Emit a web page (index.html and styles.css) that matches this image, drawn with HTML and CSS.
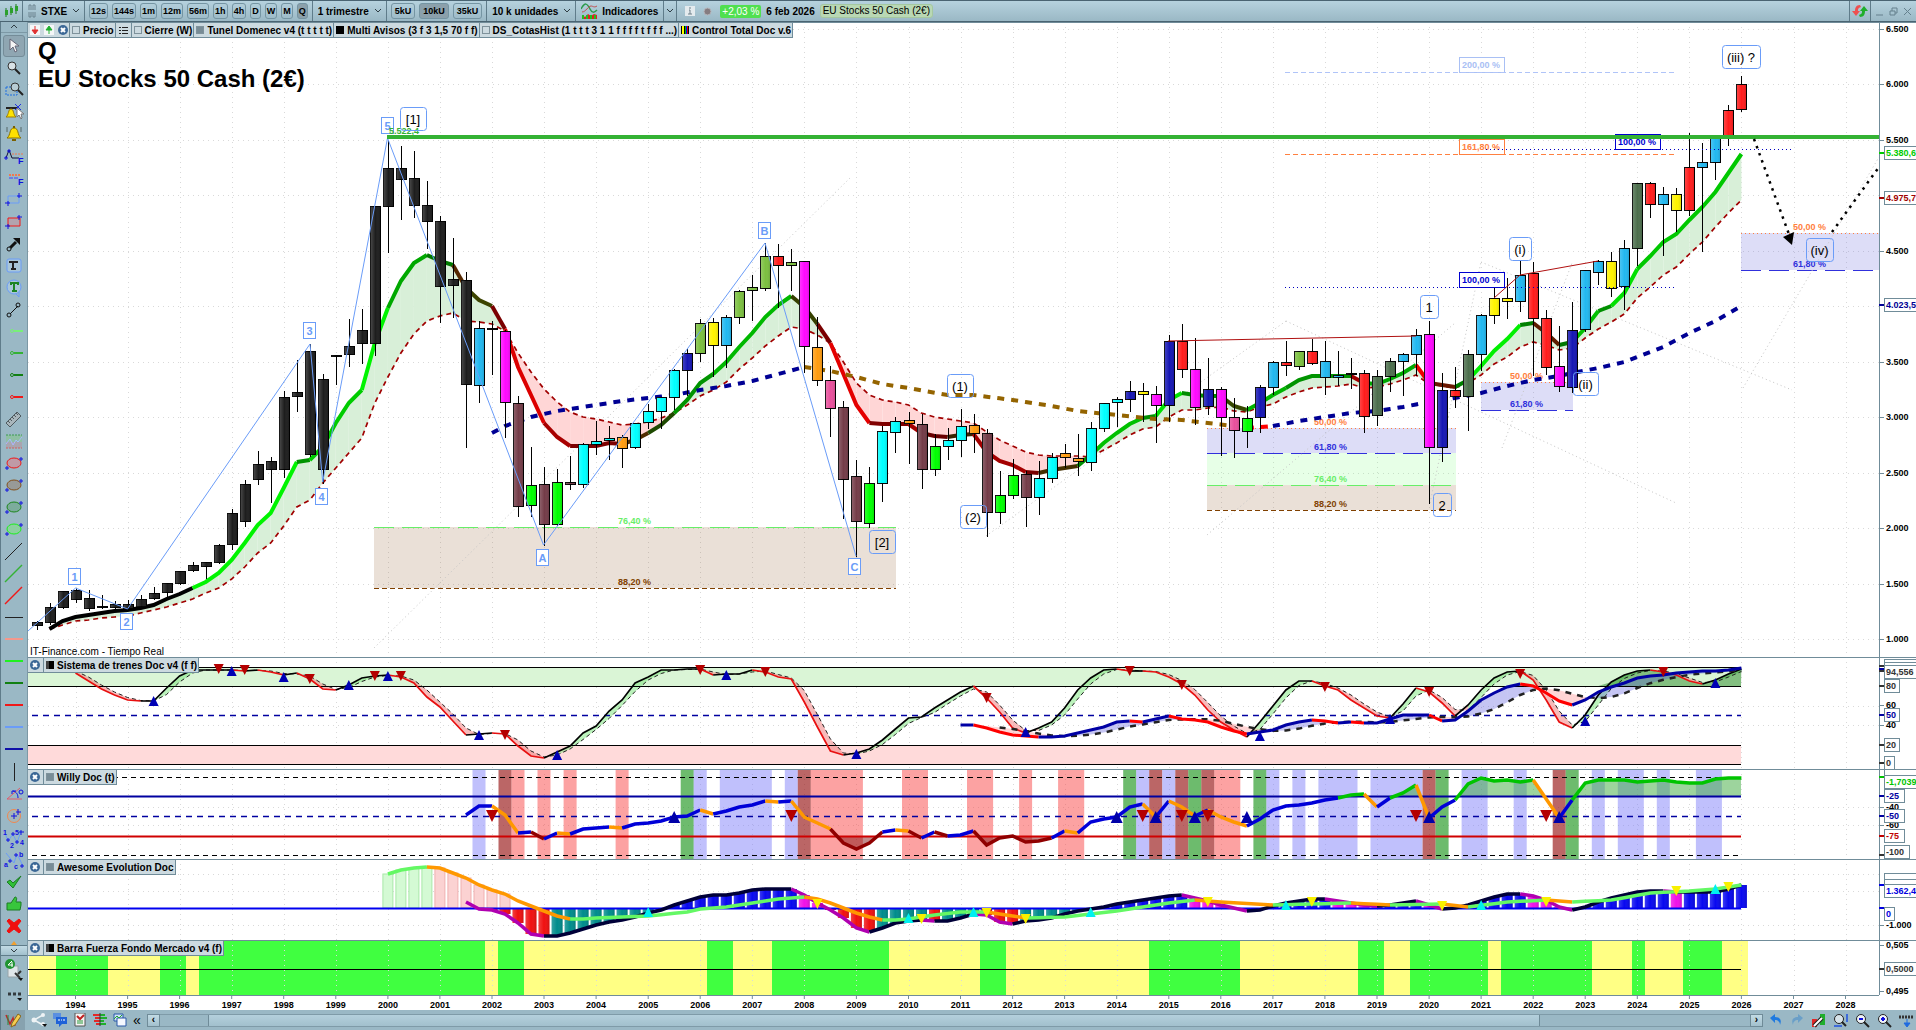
FILE: index.html
```html
<!DOCTYPE html>
<html lang="es">
<head>
    <meta charset="UTF-8">
    <meta name="viewport" content="width=device-width, initial-scale=1.0">
    <title>EU Stocks 50 Cash (2€)</title>
    <link rel="stylesheet" href="styles.css">
</head>
<body>
    <!-- Top toolbar -->
    <header class="toolbar">
        <div class="group group-logo">
            <svg width="14" height="14" viewBox="0 0 14 14"><path d="M2 4v9M7 2v9M12 0v10" stroke="#1c7a1c"/><path d="M1 6h3v5H1zM6 4h3v5H6zM11 2h3v5h-3z" fill="#2ca02c"/></svg>
        </div>
        <div class="group">
            <svg width="8" height="16" viewBox="0 0 8 16"><path d="M1 7V2h2v5M5 7V2h2v5M1 9v5h2V9M5 9v5h2V9" fill="none" stroke="#6c8490"/></svg>
            <label class="dropdown"><select aria-label="Valor"><option>STXE</option></select><svg class="chevron" viewBox="0 0 6 4"><path d="M0 0l3 3 3-3"/></svg></label>
        </div>
        <div class="group group-frames">
            <button>12s</button>
            <button>144s</button>
            <button>1m</button>
            <button>12m</button>
            <button>56m</button>
            <button>1h</button>
            <button>4h</button>
            <button>D</button>
            <button>W</button>
            <button>M</button>
            <button class="active">Q</button>
        </div>
        <div class="group">
            <label class="dropdown"><select aria-label="Periodo"><option>1 trimestre</option></select><svg class="chevron" viewBox="0 0 6 4"><path d="M0 0l3 3 3-3"/></svg></label>
        </div>
        <div class="group group-frames group-units">
            <button>5kU</button>
            <button class="active">10kU</button>
            <button>35kU</button>
        </div>
        <div class="group">
            <label class="dropdown"><select aria-label="Unidades"><option>10 k unidades</option></select><svg class="chevron" viewBox="0 0 6 4"><path d="M0 0l3 3 3-3"/></svg></label>
        </div>
        <div class="group">
            <button class="plain"><svg width="17" height="17" viewBox="0 0 17 17"><path d="M1 16v-4l3 2 3-3 3 2 3-2 3 1v4z" fill="#e02020"/><path d="M2 12v4M6 12v4M10 12v4M14 12v4" stroke="#20c020" stroke-width="2"/><path d="M0 6c4-7 6-6 9 0 2 4 4 4 7 1" fill="none" stroke="#2a9a4a" stroke-width="1.5"/><path d="M1 9c4 0 6-6 9-6 2 0 3 2 6 0" fill="none" stroke="#c05050"/></svg>Indicadores</button>
        </div>
        <div class="group group-arrow">
            <button class="plain" aria-label="Más indicadores"><svg class="chevron" viewBox="0 0 6 4"><path d="M0 0l3 3 3-3"/></svg></button>
        </div>
        <div class="group group-info">
            <svg width="10" height="10" viewBox="0 0 10 10"><path d="M0 0h10v10H0z" fill="#e4ebee"/><path d="M4 2h2M4 4h1v4M3 8h4" stroke="#70818a" fill="none"/></svg>
            <svg width="9" height="9" viewBox="0 0 9 9"><circle cx="4.5" cy="4.5" r="3.5" fill="#857c80" stroke="#b5b5ba"/></svg>
            <span class="change">+2,03 %</span>
            <b>6 feb 2026</b>
            <span class="asset">EU Stocks 50 Cash (2€)</span>
        </div>
        <div class="group group-sync">
            <svg width="16" height="16" viewBox="0 0 16 16"><path d="M8 2C4 2 3 5 3 8H0l4 5 4-5H6c0-2 0-3 3-4z" fill="#ee5050"/><path d="M8 14c4 0 5-3 5-6h3l-4-5-4 5h2c0 2 0 3-3 4z" fill="#1fae2c"/></svg>
        </div>
        <div class="window-buttons">
            <button aria-label="Minimizar"><svg width="9" height="9" viewBox="0 0 9 9"><path d="M1 8h7"/></svg></button>
            <button aria-label="Restaurar"><svg width="9" height="9" viewBox="0 0 9 9"><path d="M1 4h5v4H1zM3 4V1h5v5H6" fill="none"/></svg></button>
            <button aria-label="Cerrar"><svg width="9" height="9" viewBox="0 0 9 9"><path d="M1 1l7 7M8 1L1 8"/></svg></button>
        </div>
    </header>

    <div class="workspace">
        <!-- Drawing tools -->
        <nav class="sidebar">
            <button class="collapse" aria-label="Subir"><svg class="chevron" viewBox="0 0 6 4"><path d="M0 3l3-3 3 3"/></svg></button>
            <button class="tool selected" aria-label="Cursor"><svg viewBox="0 0 22 22"><path d="M7 4v11l3-3 2 5 2-1-2-5h4z" fill="#f4f4f4" stroke="#667"/></svg></button>
            <button class="tool" aria-label="Lupa"><svg viewBox="0 0 22 22"><circle cx="9" cy="9" r="4" fill="#d8e2e6" stroke="#333"/><path d="M12 12l5 5" stroke="#222" stroke-width="2"/></svg></button>
            <button class="tool" aria-label="Lupa de zona"><svg viewBox="0 0 22 22"><path d="M3 8h11v8H3z" fill="none" stroke="#1f6fe0" stroke-dasharray="2 1"/><circle cx="12" cy="8" r="4" fill="#b8ccd4" stroke="#333"/><path d="M15 11l5 5" stroke="#222" stroke-width="2"/></svg></button>
            <button class="tool" aria-label="Alerta en objeto"><svg viewBox="0 0 22 22"><path d="M3 7h12" stroke="#222" stroke-width="2"/><path d="M3 16c3-2 2-8 5-8s2 6 5 8z" fill="#ffe400" stroke="#a08000"/><path d="M12 3l6 6M18 3l-6 6" stroke="#2030e0"/><path d="M14 7v9l2-2 2 4 1-1-1-4h3z" fill="#fff" stroke="#777"/></svg></button>
            <button class="tool" aria-label="Alerta"><svg viewBox="0 0 22 22"><path d="M4 15c4-3 2-10 7-10s3 7 7 10z" fill="#ffe000" stroke="#8a7200"/><path d="M11 3v2M9 17h4" stroke="#7a6000" stroke-width="2"/><path d="M4 4v5M18 4v5" stroke="#566"/></svg></button>
            <button class="tool" aria-label="Fibonacci extensión"><svg viewBox="0 0 22 22"><path d="M3 13l3-8 3 8h7" fill="none" stroke="#113"/><path d="M9 9h11" stroke="#f07850" stroke-dasharray="2 1"/><path d="M1 13h4M3 11v4M4 6h4M6 4v4" stroke="#1010e0"/><text x="15" y="19">F</text></svg></button>
            <button class="tool" aria-label="Fibonacci retroceso"><svg viewBox="0 0 22 22"><path d="M6 8h11" stroke="#f07850" stroke-width="2" stroke-dasharray="2 1"/><path d="M6 11h10" stroke="#4040ff" stroke-dasharray="4 1"/><text x="15" y="18">F</text></svg></button>
            <button class="tool" aria-label="Rectángulo azul"><svg viewBox="0 0 22 22"><path d="M5 7h11v7H5z" fill="none" stroke="#6a9cf8"/><path d="M2 14h5M5 12v5M14 7h5M16 4v5" stroke="#1010e0"/></svg></button>
            <button class="tool" aria-label="Rectángulo rojo"><svg viewBox="0 0 22 22"><path d="M5 7h12v8H5z" fill="#b3a3ae" stroke="#f01818"/><path d="M2 15h5M5 13v5M14 6h5M16 4v5" stroke="#1010e0"/></svg></button>
            <button class="tool" aria-label="Flecha"><svg viewBox="0 0 22 22"><path d="M7 15l6-6" stroke="#111" stroke-width="3"/><path d="M10 5h7v7z" fill="#111"/><circle cx="6" cy="16" r="2" fill="#9ab8c5" stroke="#111"/></svg></button>
            <button class="tool" aria-label="Nota"><svg viewBox="0 0 22 22"><rect x="4" y="4" width="14" height="13" rx="2" fill="#a9c6d8" stroke="#6a9cf8"/><path d="M7 8V7h7v1M10 7v7M8 14h5" fill="none" stroke="#222" stroke-width="2"/></svg></button>
            <button class="tool" aria-label="Texto"><svg viewBox="0 0 22 22"><circle cx="11" cy="10" r="7" fill="#a9c6d8" stroke="#6a9cf8"/><path d="M13 17l3 3V15" fill="none" stroke="#6a9cf8"/><path d="M8 8V6h7v2M11 6v8M9 14h5" fill="none" stroke="#1c8424" stroke-width="2"/></svg></button>
            <button class="tool" aria-label="Segmento"><svg viewBox="0 0 22 22"><path d="M7 15l8-8" stroke="#111"/><circle cx="6" cy="16" r="2" fill="none" stroke="#111"/><circle cx="15" cy="6" r="2" fill="none" stroke="#111"/></svg></button>
            <button class="tool" aria-label="Semirrecta lima"><svg viewBox="0 0 22 22"><path d="M11 10h9" stroke="#78f078" stroke-width="2"/><circle cx="9" cy="10" r="1.5" fill="none" stroke="#78f078"/></svg></button>
            <button class="tool" aria-label="Semirrecta verde"><svg viewBox="0 0 22 22"><path d="M11 10h9" stroke="#34b234" stroke-width="2"/><circle cx="9" cy="10" r="1.5" fill="none" stroke="#34b234"/></svg></button>
            <button class="tool" aria-label="Semirrecta verde oscuro"><svg viewBox="0 0 22 22"><path d="M11 10h9" stroke="#128012" stroke-width="2"/><circle cx="9" cy="10" r="1.5" fill="none" stroke="#128012"/></svg></button>
            <button class="tool" aria-label="Semirrecta roja"><svg viewBox="0 0 22 22"><path d="M11 10h9" stroke="#f01818" stroke-width="2"/><circle cx="9" cy="10" r="1.5" fill="none" stroke="#f01818"/></svg></button>
            <button class="tool" aria-label="Regla"><svg viewBox="0 0 22 22"><path d="M3 14L14 3l4 4L7 18z" fill="#a9b6bc" stroke="#4f5b60"/><path d="M5 12l2 2M7 10l2 2M9 8l2 2M11 6l2 2M13 4l2 2" stroke="#4f5b60"/></svg></button>
            <button class="tool" aria-label="Canal"><svg viewBox="0 0 22 22"><path d="M3 4h16v7H3z" fill="#8fc0a4"/><path d="M3 11h16v6H3z" fill="#a9a5b0"/><path d="M3 4h16" stroke="#3c9a50" stroke-dasharray="2 1"/><path d="M3 17h16" stroke="#d06060" stroke-dasharray="2 1"/><path d="M3 13l4-5 3 6 3-5 2 2 4-5" fill="none" stroke="#a9b8ff"/></svg></button>
            <button class="tool" aria-label="Elipse roja"><svg viewBox="0 0 22 22"><ellipse cx="11" cy="10" rx="7" ry="5" fill="#c09aa6" stroke="#f01818"/><path d="M2 15h4M4 13v4M16 6h4M18 4v4" stroke="#1010e0"/></svg></button>
            <button class="tool" aria-label="Elipse marrón"><svg viewBox="0 0 22 22"><ellipse cx="11" cy="10" rx="7" ry="5" fill="#989a98" stroke="#84501c"/><path d="M2 15h4M4 13v4M16 6h4M18 4v4" stroke="#1010e0"/></svg></button>
            <button class="tool" aria-label="Elipse verde"><svg viewBox="0 0 22 22"><ellipse cx="11" cy="10" rx="7" ry="5" fill="#7cac9c" stroke="#1c861c"/><path d="M2 15h4M4 13v4M16 6h4M18 4v4" stroke="#1010e0"/></svg></button>
            <button class="tool" aria-label="Elipse lima"><svg viewBox="0 0 22 22"><ellipse cx="11" cy="10" rx="7" ry="5" fill="#8cd0a0" stroke="#1cf01c"/><path d="M2 15h4M4 13v4M16 6h4M18 4v4" stroke="#1010e0"/></svg></button>
            <button class="tool" aria-label="Recta negra"><svg viewBox="0 0 22 22"><path d="M2 19L19 2" stroke="#222"/></svg></button>
            <button class="tool" aria-label="Recta verde"><svg viewBox="0 0 22 22"><path d="M2 19L19 2" stroke="#34b234" stroke-width="1.5"/></svg></button>
            <button class="tool" aria-label="Recta roja"><svg viewBox="0 0 22 22"><path d="M2 19L19 2" stroke="#f01818" stroke-width="1.5"/></svg></button>
            <button class="tool" aria-label="Horizontal negra"><svg viewBox="0 0 22 22"><path d="M2 10.5h18" stroke="#222"/></svg></button>
            <button class="tool" aria-label="Horizontal salmón"><svg viewBox="0 0 22 22"><path d="M2 10h18" stroke="#f4988c" stroke-width="2"/></svg></button>
            <button class="tool" aria-label="Horizontal lima"><svg viewBox="0 0 22 22"><path d="M2 10h18" stroke="#20f020" stroke-width="2"/></svg></button>
            <button class="tool" aria-label="Horizontal verde"><svg viewBox="0 0 22 22"><path d="M2 10h18" stroke="#128012" stroke-width="2"/></svg></button>
            <button class="tool" aria-label="Horizontal roja"><svg viewBox="0 0 22 22"><path d="M2 10h18" stroke="#f01818" stroke-width="2"/></svg></button>
            <button class="tool" aria-label="Horizontal azul"><svg viewBox="0 0 22 22"><path d="M2 10h18" stroke="#6a9cf8" stroke-width="2"/></svg></button>
            <button class="tool" aria-label="Horizontal marino"><svg viewBox="0 0 22 22"><path d="M2 10h18" stroke="#1010a8" stroke-width="2"/></svg></button>
            <button class="tool" aria-label="Vertical"><svg viewBox="0 0 22 22"><path d="M11.5 2v18" stroke="#222"/></svg></button>
            <button class="tool" aria-label="Ángulo"><svg viewBox="0 0 22 22"><path d="M17 5L4 16h15" fill="none" stroke="#e05c6c"/><path d="M10 8c4 1 5 4 5 7M9 11V8h4" fill="none" stroke="#1010e0"/><circle cx="18" cy="9" r="2" fill="none" stroke="#1010e0"/></svg></button>
            <button class="tool" aria-label="Círculo"><svg viewBox="0 0 22 22"><circle cx="11" cy="11" r="6.5" fill="#a5b6b8" stroke="#f08850"/><path d="M8 11h6M11 8v6M13 7h5M15 4v6" stroke="#1010e0"/></svg></button>
            <button class="tool" aria-label="Ondas de impulso"><svg viewBox="0 0 22 22"><path d="M2 6l3 8 5-7 4 9 4-12" fill="none" stroke="#6a9cf8"/><path d="M3 13h4M5 11v4M8 7h4M10 5v4M12 15h4M14 13v4M16 5h5M18 3v5" stroke="#1010e0"/><text class="tiny" x="0" y="8">1</text><text class="tiny" x="7" y="21">2</text><text class="tiny" x="12" y="8">5</text><text class="tiny" x="17" y="18">4</text></svg></button>
            <button class="tool" aria-label="Ondas de corrección"><svg viewBox="0 0 22 22"><path d="M3 4l8 10 3-9 6 12" fill="none" stroke="#6a9cf8"/><path d="M5 12h4M7 10v4M11 6h4M13 4v4M17 17h4M19 15v4" stroke="#1010e0"/><text class="tiny" x="1" y="18">a</text><text class="tiny" x="16" y="8">b</text><text class="tiny" x="11" y="20">c</text></svg></button>
            <button class="tool" aria-label="Aceptar"><svg viewBox="0 0 22 22"><path d="M4 11l3-2 3 3 8-7-8 12z" fill="#30c038" stroke="#1b7c22"/></svg></button>
            <button class="tool" aria-label="Me gusta"><svg viewBox="0 0 22 22"><path d="M4 10h4l4-6c3 0 1 4 1 5h5v3l-1 5H4z" fill="#38c63c" stroke="#1b7c22"/></svg></button>
            <button class="tool" aria-label="Borrar"><svg viewBox="0 0 22 22"><path d="M4 6l2-2 5 4 5-4 2 2-4 5 4 5-2 2-5-4-5 4-2-2 4-5z" fill="#f01010" stroke="#f01010"/></svg></button>
            <span class="tool-peek"><svg viewBox="0 0 22 8"><path d="M8 8l3-4 3 4z" fill="#f0a030"/></svg></span>
            <button class="expand" aria-label="Bajar"><svg class="chevron" viewBox="0 0 6 4"><path d="M0 0l3 3 3-3"/></svg></button>
            <button class="objects" aria-label="Objetos"><svg width="20" height="24" viewBox="0 0 20 24"><path d="M4 8h10v11H4z" fill="#dfe6e9" stroke="#98a4a8"/><circle cx="6" cy="6" r="5" fill="#1f9430"/><path d="M4 7h5M8 4v5M8 3L4 7" stroke="#fff" fill="none"/><path d="M11 15l5 5M17 13l-3 3" stroke="#333" stroke-width="2"/><path d="M14 20h5l-2 3z" fill="#111"/></svg></button>
            <button class="dots" aria-label="Más"><svg width="16" height="10" viewBox="0 0 16 10"><path d="M2 2h3M7 2h3M12 2h3" stroke="#333a3e" stroke-width="3"/><path d="M11 6h5l-2 3z" fill="#111"/></svg></button>
        </nav>

        <!-- Chart panes -->
        <main class="panes">
            <section class="pane pane-price">
                <div class="pane-tabs">
                    <span class="tab tab-icons"><svg width="10" height="10" viewBox="0 0 10 10"><rect width="10" height="10" fill="#f4f6f7"/><path d="M5 1v5M2 5l3 4 3-4z" fill="#e03030" stroke="#e03030"/></svg><svg width="10" height="10" viewBox="0 0 10 10"><rect width="10" height="10" fill="#f4f6f7"/><path d="M5 9V4M2 5l3-4 3 4z" fill="#20b030" stroke="#20b030"/></svg><svg width="10" height="10" viewBox="0 0 10 10"><circle cx="5" cy="5" r="5" fill="#3c6896"/><path d="M3 3l4 4M7 3L3 7" stroke="#fff" stroke-width="2"/></svg></span>
                    <span class="tab"><i class="swatch hollow"></i>Precio</span>
                    <span class="tab tab-list"><svg width="9" height="9" viewBox="0 0 9 9"><path d="M0 1.5h2M0 4.5h2M0 7.5h2M3 1.5h6M3 4.5h6M3 7.5h6" stroke="#222"/></svg></span>
                    <span class="tab"><i class="swatch hollow"></i>Cierre (W)</span>
                    <span class="tab"><i class="swatch gray"></i>Tunel Domenec v4 (t t t t t)</span>
                    <span class="tab"><i class="swatch black"></i>Multi Avisos (3 f 3 1,5 70 f f)</span>
                    <span class="tab"><i class="swatch hollow"></i>DS_CotasHist (1 t t t 3 1 1 f f f f t f f f ...)</span>
                    <span class="tab"><i class="swatch stripes"></i>Control Total Doc v.6</span>
                </div>
                <h1 class="pane-title">Q<br>EU Stocks 50 Cash (2€)</h1>
                <svg id="price" class="plot" viewBox="28 22 1888 635"></svg>
            </section>
            <section class="pane">
                <div class="pane-tabs">
                    <button class="tab close" aria-label="Cerrar panel"><svg width="10" height="10" viewBox="0 0 10 10"><circle cx="5" cy="5" r="5" fill="#3c6896"/><path d="M3 3l4 4M7 3L3 7" stroke="#fff" stroke-width="2"/></svg></button>
                    <span class="tab"><i class="swatch half"></i>Sistema de trenes Doc v4 (f f)</span>
                </div>
                <svg id="trenes" class="plot" viewBox="28 657 1888 112"></svg>
            </section>
            <section class="pane">
                <div class="pane-tabs">
                    <button class="tab close" aria-label="Cerrar panel"><svg width="10" height="10" viewBox="0 0 10 10"><circle cx="5" cy="5" r="5" fill="#3c6896"/><path d="M3 3l4 4M7 3L3 7" stroke="#fff" stroke-width="2"/></svg></button>
                    <span class="tab"><i class="swatch gray"></i>Willy Doc (t)</span>
                </div>
                <svg id="willy" class="plot" viewBox="28 769 1888 90"></svg>
            </section>
            <section class="pane">
                <div class="pane-tabs">
                    <button class="tab close" aria-label="Cerrar panel"><svg width="10" height="10" viewBox="0 0 10 10"><circle cx="5" cy="5" r="5" fill="#3c6896"/><path d="M3 3l4 4M7 3L3 7" stroke="#fff" stroke-width="2"/></svg></button>
                    <span class="tab"><i class="swatch gray"></i>Awesome Evolution Doc</span>
                </div>
                <svg id="awesome" class="plot" viewBox="28 859 1888 81"></svg>
            </section>
            <section class="pane">
                <div class="pane-tabs">
                    <button class="tab close" aria-label="Cerrar panel"><svg width="10" height="10" viewBox="0 0 10 10"><circle cx="5" cy="5" r="5" fill="#3c6896"/><path d="M3 3l4 4M7 3L3 7" stroke="#fff" stroke-width="2"/></svg></button>
                    <span class="tab"><i class="swatch half"></i>Barra Fuerza Fondo Mercado v4 (f)</span>
                </div>
                <svg id="fuerza" class="plot" viewBox="28 940 1888 70"></svg>
            </section>
        </main>
    </div>

    <!-- Bottom bar -->
    <footer class="bottombar">
        <button class="draw" aria-label="Dibujar"><svg width="16" height="16" viewBox="0 0 16 16"><path d="M1 3l4 9 3-6 2 8" fill="none" stroke="#c02828" stroke-width="1.5"/><path d="M3 3v10" stroke="#2a8a3a"/><path d="M6 15l1-4 6-9 3 2-6 9z" fill="#f5cc50" stroke="#86661c"/></svg></button>
        <button aria-label="Compartir"><svg width="16" height="16" viewBox="0 0 16 16"><path d="M12 3L3 8l9 5" fill="none" stroke="#eef3f5" stroke-width="1.5"/><circle cx="12" cy="3" r="2" fill="#eef3f5"/><circle cx="3" cy="8" r="2.5" fill="#eef3f5"/><circle cx="12" cy="12" r="2" fill="#eef3f5"/><path d="M11 12h5l-2 3z" fill="#111"/></svg></button>
        <button aria-label="Chat"><svg width="14" height="14" viewBox="0 0 14 14"><path d="M0 0h8v6H0z" fill="#5b8fe0"/><path d="M3 4h11v7H9l-3 3v-3H3z" fill="#1f62d8"/><path d="M5 7h2M8 7h1M10 7h2" stroke="#fff"/></svg></button>
        <button aria-label="Informe"><svg width="14" height="14" viewBox="0 0 14 14"><path d="M2 0h10v13H2z" fill="#f4f4f4" stroke="#555"/><path d="M4 3l3 3 4-4" stroke="#c02020" stroke-width="2" fill="none"/><path d="M4 8h6M4 10h6" stroke="#2a9a3a"/></svg></button>
        <button aria-label="Libro de órdenes"><svg width="14" height="14" viewBox="0 0 14 14"><path d="M0 2h7M2 5h5M1 8h6M3 11h4" stroke="#e02828" stroke-width="2"/><path d="M7 2h5M7 5h7M7 8h4M7 11h6" stroke="#1fae2c" stroke-width="2"/><path d="M7 0v13" stroke="#333"/></svg></button>
        <button aria-label="Ventanas"><svg width="14" height="14" viewBox="0 0 14 14"><path d="M1 1h9v7H1z" fill="#cfe0f8" stroke="#2858a8"/><path d="M4 5h9v8H4z" fill="#f4f8ff" stroke="#2858a8"/><path d="M1 6l3-3 2 2 3-3" fill="none" stroke="#1fae2c"/></svg></button>
        <button class="fold" aria-label="Plegar">«</button>
        <div class="scrollbar">
            <button aria-label="Izquierda">‹</button>
            <div class="track"><div class="thumb"></div></div>
            <button aria-label="Derecha">›</button>
        </div>
        <div class="view-buttons">
            <button aria-label="Deshacer"><svg width="14" height="14" viewBox="0 0 14 14"><path d="M1 5l5-4v3c5 0 7 3 5 8 0-3-2-5-5-5v3z" fill="#1f7ae0"/></svg></button>
            <button aria-label="Rehacer"><svg width="14" height="14" viewBox="0 0 14 14"><path d="M13 5L8 1v3C3 4 1 7 3 12c0-3 2-5 5-5v3z" fill="#6a9fc8"/></svg></button>
            <button aria-label="Configurar"><svg width="15" height="15" viewBox="0 0 15 15"><path d="M1 6h5v8H1z" fill="#e02828"/><path d="M9 1h5v11H9z" fill="#1fae2c"/><path d="M3 13l8-8" stroke="#222" stroke-width="4"/><path d="M3 13l8-8" stroke="#fff" stroke-width="2"/></svg></button>
            <button aria-label="Ajustar"><svg width="15" height="15" viewBox="0 0 15 15"><circle cx="6" cy="6" r="4.5" fill="#d8e4ea" stroke="#222"/><path d="M9 9l4 4" stroke="#222" stroke-width="2"/><path d="M14 1v8M1 13h8" stroke="#1f50e0" stroke-width="1.5"/></svg></button>
            <button aria-label="Alejar"><svg width="15" height="15" viewBox="0 0 15 15"><circle cx="6" cy="6" r="4.5" fill="#f0f4f8" stroke="#222"/><path d="M9 9l5 5" stroke="#222" stroke-width="2"/><path d="M4 6h4" stroke="#1010e0" stroke-width="2"/></svg></button>
            <button aria-label="Acercar"><svg width="15" height="15" viewBox="0 0 15 15"><circle cx="6" cy="6" r="4.5" fill="#f0f4f8" stroke="#222"/><path d="M9 9l5 5" stroke="#222" stroke-width="2"/><path d="M4 6h4M6 4v4" stroke="#1010e0" stroke-width="2"/></svg></button>
            <button aria-label="Descargar"><svg width="15" height="15" viewBox="0 0 15 15"><path d="M0 4h15" stroke="#333" stroke-width="3" stroke-dasharray="2 1"/><path d="M8 6v5M5 10h6l-3 4z" fill="#1f6ae0" stroke="#1f6ae0"/></svg></button>
        </div>
    </footer>

    <script src="chart.js"></script>
</body>
</html>
```
FILE: styles.css
```css
/* General Reset */
* {
    margin: 0;
    padding: 0;
    box-sizing: border-box;
}

body {
    min-height: 100vh;
    display: flex;
    flex-direction: column;
    background-color: #9ab8c5;
    font-family: "Liberation Sans", Arial, sans-serif;
    font-size: 10px;
    color: #000;
}

button, select {
    font: inherit;
    color: inherit;
    background: none;
    border: none;
}

svg {
    display: block;
    flex: none;
}

/* Top toolbar */
.toolbar {
    display: flex;
    align-items: stretch;
    height: 22px;
    border-top: 1px solid #4a6472;
    border-bottom: 1px solid #4a6472;
    background: linear-gradient(#b6d2de, #9ab8c5);
    font-weight: bold;
    white-space: nowrap;
}

.group {
    display: flex;
    align-items: center;
    gap: 5px;
    padding: 0 5px;
    border-right: 1px solid #5f7c8a;
}

.group-logo {
    padding: 0 4px;
}

.group-frames {
    gap: 4px;
    padding: 0 4px;
    font-size: 9px;
}

.group-frames button {
    height: 16px;
    padding: 0 1px;
    border: 1px solid #7595a3;
    border-radius: 3px;
}

.group-units button {
    padding: 0 3px;
}

.group-frames .active {
    background-color: #8ba0ab;
}

.dropdown {
    display: flex;
    align-items: center;
    gap: 5px;
}

.dropdown select {
    appearance: none;
    font-weight: bold;
}

.chevron {
    width: 6px;
    height: 4px;
    fill: none;
    stroke: #2f3d44;
    stroke-width: 1;
    overflow: visible;
}

.plain {
    display: flex;
    align-items: center;
    gap: 4px;
    font-weight: bold;
}

.group-arrow {
    padding: 0 3px;
}

.group-info {
    flex: 1;
    gap: 5px;
    padding-left: 8px;
}

.group-info svg {
    margin-right: 3px;
}

.change {
    padding: 0 2px;
    line-height: 13px;
    border-radius: 2px;
    background-color: #50e050;
    color: #fff;
    font-weight: normal;
}

.asset {
    padding: 0 2px;
    line-height: 12px;
    border: 1px solid #a5c8a0;
    border-radius: 3px;
    background-color: #b9d8b4;
    font-weight: normal;
}

.group-sync {
    padding: 0 2px;
}

.window-buttons {
    display: flex;
    align-items: center;
    gap: 5px;
    padding: 0 4px;
    stroke: #64808d;
    stroke-width: 1;
}

/* Drawing tools */
.workspace {
    display: flex;
    align-items: stretch;
}

.sidebar {
    display: flex;
    flex-direction: column;
    width: 28px;
    flex: none;
    border-left: 1px solid #5f7c8a;
    border-right: 1px solid #7c98a5;
    background-color: #9ab8c5;
}

.sidebar button {
    display: flex;
    align-items: center;
    justify-content: center;
}

.collapse {
    height: 11px;
    margin-bottom: 2px;
    border-bottom: 1px solid #7c98a5;
}

.tool {
    height: 22px;
    margin: 0 2px;
    border: 1px solid transparent;
    border-radius: 3px;
}

.tool svg {
    width: 22px;
    height: 22px;
}

.tool text {
    font-size: 9px;
    font-weight: bold;
    fill: #1010e0;
}

.tool .tiny {
    font-size: 7px;
}

.tool.selected {
    border-color: #748c98;
    background-color: #8fa6b2;
}

.tool-peek {
    display: flex;
    justify-content: center;
    margin-top: auto;
}

.tool-peek svg {
    width: 22px;
    height: 8px;
}

.expand {
    height: 11px;
    border: solid #5f7c8a;
    border-width: 1px 0;
    background: linear-gradient(#c2dbe5, #a2c0cd);
}

.objects {
    height: 28px;
}

.dots {
    height: 26px;
}

/* Chart panes */
.panes {
    flex: 1;
    min-width: 0;
    background-color: #fff;
}

.pane {
    position: relative;
}

.plot {
    width: 100%;
}

.pane-tabs {
    position: absolute;
    top: 1px;
    left: 0;
    display: flex;
    height: 15px;
    border-bottom: 1px solid #708c99;
    background-color: #ccdae0;
    font-weight: bold;
    white-space: nowrap;
}

.tab {
    display: flex;
    align-items: center;
    gap: 3px;
    padding: 0 1px 0 2px;
    border-right: 1px solid #708c99;
}

.tab-icons {
    gap: 4px;
}

.tab-list {
    padding: 0 3px;
}

.tab.close {
    padding: 0 3px 0 2px;
}

.swatch {
    width: 8px;
    height: 8px;
    border: 1px solid #7f929b;
}

.gray {
    background-color: #788c96;
}

.black {
    border-color: #000;
    background-color: #000;
}

.half {
    border: none;
    background: linear-gradient(90deg, #444 3px, #000 3px);
}

.stripes {
    border: none;
    background: linear-gradient(90deg, #000 1px, #ff0 1px 3px, #000 3px 4px, #0b0 4px 5px, #00f 5px 6px, #d00 6px 7px, #000 7px);
}

.pane-title {
    position: absolute;
    top: 15px;
    left: 10px;
    font-size: 24px;
    line-height: 28px;
}

/* Plot text */
.plot text {
    font-size: 9px;
    font-weight: bold;
}

.plot .wave {
    font-size: 13px;
    font-weight: normal;
}

.plot .wave-small {
    font-size: 11px;
    fill: #6a9cf8;
}

.plot .credit {
    font-size: 10px;
    font-weight: normal;
}

/* Bottom bar */
.bottombar {
    display: flex;
    align-items: center;
    gap: 6px;
    height: 20px;
    padding-right: 2px;
    border-left: 1px solid #5f7c8a;
    background-color: #9ab8c5;
}

.draw {
    display: flex;
    align-items: center;
    justify-content: center;
    width: 24px;
    height: 20px;
    background-color: #87a2af;
}

.fold {
    font-size: 14px;
    line-height: 14px;
}

.scrollbar {
    flex: 1;
    display: flex;
    height: 13px;
}

.scrollbar button {
    width: 13px;
    border: 1px solid #6f8b98;
    background: linear-gradient(#c2dbe5, #a2c0cd);
    font-weight: bold;
    line-height: 8px;
}

.track {
    flex: 1;
    padding: 0 13% 0 3%;
    border: solid #7f9ba8;
    border-width: 1px 0;
}

.thumb {
    height: 100%;
    border: solid #6f8b98;
    border-width: 0 1px;
    background: linear-gradient(#b4d0dc, #a2c0cd);
}

.view-buttons {
    display: flex;
    gap: 7px;
}
```
FILE: chart.js
```js
const X0 = 75.5;      // first quarter of 1994
const STEP = 13.015;  // one quarter
const END = 1741;
const AXIS = 1879;

const x = k => Math.round((X0 + STEP * k) * 10) / 10;
const svg = id => document.getElementById(id);

function add(id, markup) {
    svg(id).insertAdjacentHTML('beforeend', markup);
}

function line(x1, y1, x2, y2, color, width = 1, extra = '') {
    return `<line x1="${x1}" y1="${y1}" x2="${x2}" y2="${y2}" stroke="${color}" stroke-width="${width}" ${extra}/>`;
}

function poly(points, color, width, extra = '') {
    return `<polyline points="${points.map(p => p.join(',')).join(' ')}" fill="none" stroke="${color}" stroke-width="${width}" ${extra}/>`;
}

function rect(x1, y1, x2, y2, fill, extra = '') {
    return `<rect x="${x1}" y="${y1}" width="${x2 - x1}" height="${y2 - y1}" fill="${fill}" ${extra}/>`;
}

function text(tx, ty, content, color = '#000', extra = '') {
    return `<text x="${tx}" y="${ty}" fill="${color}" ${extra}>${content}</text>`;
}

// array of values starting at quarter k -> points
function series(start, values) {
    return values.map((y, i) => [x(start + i), y]);
}

// fills missing quarters of a sparse [k, y] list
function spread(list) {
    const out = [];
    for (let i = 0; i < list.length - 1; i++) {
        const [a, ya] = list[i], [b, yb] = list[i + 1];
        for (let k = a; k < b; k++) out.push(ya + (yb - ya) * (k - a) / (b - a));
    }
    out.push(list[list.length - 1][1]);
    return out;
}

function grid(id, top, bottom, rows) {
    let out = '';
    for (let k = 0; k <= 136; k += 4) out += line(Math.round(x(k)) + .5, top, Math.round(x(k)) + .5, bottom, '#d9d9d9', 1, 'stroke-dasharray="1 4"');
    rows.forEach(y => out += line(28, y + .5, AXIS, y + .5, '#d9d9d9', 1, 'stroke-dasharray="1 4"'));
    add(id, out);
}

function area(a, b, start, upColor, downColor) {
    let out = '';
    for (let i = 0; i < a.length - 1; i++) {
        const color = a[i] + a[i + 1] < b[i] + b[i + 1] ? upColor : downColor;
        const l = x(start + i), r = x(start + i + 1);
        out += `<polygon points="${l},${a[i]} ${r},${a[i + 1]} ${r},${b[i + 1]} ${l},${b[i]}" fill="${color}"/>`;
    }
    return out;
}

// line whose every segment takes its own colour, equal neighbours are joined
function colored(points, width, pick) {
    let out = '', run = [points[0]], last = null;
    for (let i = 1; i < points.length; i++) {
        const c = pick(i, points[i - 1][1], points[i][1]);
        if (last && c !== last) {
            out += poly(run, last, width);
            run = [points[i - 1]];
        }
        run.push(points[i]);
        last = c;
    }
    return out + poly(run, last, width);
}

function up(k, y, color, s = 6) {
    return `<polygon points="${x(k) - s},${y + s} ${x(k) + s},${y + s} ${x(k)},${y - s}" fill="${color}"/>`;
}

function down(k, y, color, s = 6) {
    return `<polygon points="${x(k) - s},${y - s} ${x(k) + s},${y - s} ${x(k)},${y + s}" fill="${color}"/>`;
}

// empty labels are boxes hidden behind a newer one
function axis(id, top, bottom, plain, boxed) {
    let out = rect(AXIS, top, 1916, bottom, '#fff') + line(AXIS + .5, top, AXIS + .5, bottom, '#708c99');
    plain.forEach(([label, y]) => out += line(AXIS, y + .5, AXIS + 5, y + .5, '#708c99') + text(AXIS + 7, y + 3, label));
    boxed.forEach(([label, y, color = '#333', tick = y]) => {
        out += line(AXIS, tick, AXIS + 5, tick, color, 2);
        out += rect(AXIS + 5.5, y - 6.5, AXIS + 10.5 + (label.length || 6) * 5, y + 6.5, '#fff', 'stroke="#708c99"');
        if (label) out += text(AXIS + 7, y + 3, label, color);
    });
    out += line(28, top + .5, 1916, top + .5, '#708c99');
    add(id, out);
}

/* ---------- Price ---------- */

const colors = {
    K: '#1d1d1d', B: '#22b8f0', Y: '#fff400', M: '#ff08ff', W: '#743c48', G: '#00ff00', C: '#00ffff',
    O: '#ff9c10', N: '#1616b4', L: '#7cc040', R: '#ff1c1c', D: '#4d6f4d', P: '#e8509c'
};

// high, body top, body bottom, low, colour; one row per quarter since 1993 Q2
const candles = [
    [621, 622, 626, 629, 'K'], [603, 607, 623, 624, 'K'], [591, 591, 608, 608, 'K'], [588, 590, 600, 602, 'K'],
    [590, 598, 609, 610, 'K'], [595, 606, 608, 608, 'K'], [601, 604, 608, 608, 'K'], [600, 604, 609, 610, 'K'],
    [595, 599, 607, 607, 'K'], [587, 593, 599, 599, 'K'], [583, 583, 593, 599, 'K'], [571, 571, 584, 584, 'K'],
    [562, 565, 571, 571, 'K'], [562, 562, 567, 578, 'K'], [544, 545, 563, 563, 'K'], [509, 513, 545, 549, 'K'],
    [480, 484, 522, 526, 'K'], [451, 464, 480, 484, 'K'], [457, 461, 470, 502, 'K'], [391, 397, 470, 477, 'K'],
    [360, 392, 397, 411, 'K'], [344, 351, 455, 456, 'K'], [374, 379, 470, 483, 'K'], [355, 355, 357, 384, 'K'],
    [319, 346, 355, 366, 'K'], [309, 330, 344, 363, 'K'], [206, 206, 344, 355, 'K'], [140, 168, 207, 252, 'K'],
    [146, 168, 180, 219, 'K'], [151, 178, 206, 217, 'K'], [181, 205, 222, 248, 'K'], [216, 221, 287, 322, 'K'],
    [238, 279, 286, 317, 'K'], [272, 280, 385, 447, 'K'], [321, 328, 386, 402, 'B'], [321, 328, 330, 374, 'Y'],
    [330, 331, 403, 437, 'M'], [396, 403, 507, 516, 'W'], [447, 485, 506, 516, 'G'], [467, 484, 525, 545, 'W'],
    [469, 482, 525, 525, 'G'], [456, 482, 485, 489, 'W'], [443, 444, 485, 487, 'C'], [421, 441, 445, 454, 'C'],
    [426, 438, 441, 459, 'C'], [435, 437, 449, 467, 'O'], [423, 423, 448, 448, 'C'], [404, 411, 423, 428, 'C'],
    [397, 397, 412, 428, 'C'], [369, 370, 398, 409, 'C'], [349, 353, 371, 395, 'N'], [319, 323, 354, 361, 'L'],
    [318, 322, 346, 376, 'Y'], [315, 317, 346, 367, 'B'], [290, 291, 318, 323, 'L'], [275, 287, 291, 320, 'L'],
    [243, 256, 289, 290, 'L'], [244, 256, 266, 307, 'R'], [249, 262, 266, 290, 'L'], [261, 261, 347, 372, 'M'],
    [317, 347, 381, 385, 'O'], [366, 380, 409, 436, 'P'], [401, 407, 480, 518, 'W'], [460, 476, 522, 556, 'W'],
    [467, 483, 524, 527, 'G'], [426, 431, 484, 501, 'C'], [417, 421, 433, 452, 'C'], [412, 420, 424, 463, 'O'],
    [414, 424, 470, 488, 'W'], [434, 446, 470, 475, 'G'], [428, 440, 447, 459, 'C'], [409, 426, 441, 456, 'C'],
    [414, 425, 434, 452, 'O'], [429, 433, 513, 536, 'W'], [471, 495, 513, 523, 'G'], [459, 475, 496, 498, 'G'],
    [471, 474, 498, 526, 'W'], [461, 478, 498, 514, 'C'], [453, 457, 479, 482, 'C'], [444, 453, 458, 467, 'O'],
    [434, 458, 462, 475, 'O'], [422, 428, 463, 470, 'C'], [403, 403, 429, 431, 'C'], [397, 399, 403, 426, 'C'],
    [381, 391, 400, 411, 'N'], [383, 391, 395, 421, 'Y'], [386, 394, 406, 442, 'M'], [335, 341, 406, 421, 'N'],
    [324, 341, 370, 377, 'R'], [338, 369, 408, 424, 'M'], [358, 389, 407, 414, 'N'], [387, 389, 418, 455, 'M'],
    [398, 417, 431, 457, 'P'], [406, 418, 432, 447, 'G'], [385, 387, 418, 432, 'N'], [361, 362, 388, 394, 'B'],
    [341, 362, 366, 375, 'R'], [351, 351, 367, 369, 'L'], [339, 351, 364, 364, 'R'], [341, 361, 378, 394, 'B'],
    [351, 375, 378, 385, 'B'], [358, 373, 375, 388, 'K'], [370, 373, 417, 432, 'R'], [370, 376, 416, 425, 'D'],
    [358, 361, 377, 391, 'D'], [353, 354, 362, 395, 'B'], [329, 335, 355, 375, 'B'], [321, 334, 448, 503, 'M'],
    [373, 390, 448, 461, 'N'], [367, 390, 397, 407, 'R'], [350, 354, 397, 430, 'D'], [314, 315, 355, 370, 'B'],
    [285, 298, 316, 323, 'Y'], [278, 298, 302, 318, 'Y'], [260, 275, 302, 311, 'B'], [262, 273, 319, 375, 'R'],
    [310, 318, 368, 374, 'R'], [326, 366, 387, 391, 'M'], [302, 330, 388, 392, 'N'], [270, 270, 330, 331, 'B'],
    [260, 261, 273, 284, 'B'], [252, 261, 289, 296, 'Y'], [240, 248, 287, 309, 'B'], [183, 183, 249, 265, 'D'],
    [182, 183, 205, 217, 'R'], [187, 194, 205, 255, 'B'], [188, 194, 211, 231, 'Y'], [133, 167, 211, 215, 'R'],
    [143, 162, 168, 251, 'B'], [136, 136, 163, 179, 'B'], [105, 110, 137, 145, 'R'], [76, 84, 110, 111, 'R']
];

// both tunnel lines start at quarter -2
const fast = [
    629, 621, 617, 615, 613, 611, 610, 608, 605, 599, 594, 588, 582, 573, 560, 543, 525, 513, 488, 462, 460, 447,
    423, 403, 390, 343, 308, 281, 263, 255, 261, 265, 288, 300, 306, 329, 367, 395, 423, 437, 446, 446, 446, 443,
    444, 440, 433, 425, 413, 400, 383, 374, 362, 347, 333, 317, 305, 296, 307, 324, 343, 374, 405, 423, 424, 424,
    424, 433, 436, 437, 435, 434, 452, 461, 465, 472, 473, 470, 468, 466, 455, 443, 433, 424, 418, 416, 400, 393,
    395, 396, 396, 406, 410, 403, 395, 388, 380, 376, 376, 376, 376, 383, 384, 379, 373, 365, 383, 385, 387, 380,
    366, 351, 339, 325, 323, 333, 345, 342, 328, 311, 306, 293, 269, 256, 242, 234, 220, 207, 192, 173, 154
];
const slow = [
    629, 625, 621, 620, 618, 617, 616, 613, 610, 607, 603, 599, 593, 588, 579, 567, 553, 543, 526, 507, 500, 483,
    468, 453, 438, 403, 377, 353, 334, 321, 316, 313, 321, 322, 324, 331, 353, 372, 389, 402, 412, 417, 419, 422,
    425, 424, 422, 418, 413, 405, 396, 390, 382, 369, 358, 346, 336, 327, 329, 335, 343, 362, 383, 395, 400, 402,
    405, 413, 417, 419, 421, 423, 432, 440, 446, 452, 455, 456, 456, 456, 457, 450, 443, 435, 429, 427, 417, 410,
    410, 408, 407, 411, 412, 407, 404, 397, 392, 388, 387, 386, 384, 388, 387, 384, 380, 375, 384, 386, 388, 383,
    375, 364, 357, 347, 342, 345, 350, 348, 338, 329, 322, 314, 298, 287, 275, 267, 254, 242, 227, 213, 200
];

// quarter up to which each colour of the fast line lasts
const fastColors = [
    [9, '#000'], [17, '#00f400'], [18, '#009400'], [22, '#00cc00'], [24, '#00f400'], [27, '#00a800'], [29, '#007a00'],
    [30, '#552800'], [32, '#3c4400'], [33, '#7a0000'], [36, '#dc0000'], [38, '#a80000'], [42, '#7c0000'],
    [44, '#502c00'], [46, '#1e4a00'], [49, '#009400'], [55, '#00b800'], [57, '#364000'], [58, '#7a0000'],
    [61, '#e40000'], [64, '#800000'], [65, '#a40000'], [67, '#680000'], [69, '#3a2400'], [73, '#a40000'],
    [74, '#780000'], [77, '#443000'], [78, '#009000'], [82, '#00c000'], [83, '#009000'], [85, '#00e400'],
    [88, '#008c00'], [90, '#364800'], [93, '#00b400'], [98, '#009400'], [99, '#a40000'], [103, '#00a800'],
    [104, '#f00000'], [106, '#6c1800'], [107, '#008000'], [111, '#00f000'], [112, '#008000'], [114, '#601c00'],
    [115, '#007800'], [117, '#00c000'], [118, '#009000'], [120, '#00e000'], [128, '#00c800']
];

grid('price', 22, 657, [29, 84, 140, 195, 251, 306, 362, 417, 473, 528, 584, 639]);

function fibBox(x1, x2, levels, fills, tx) {
    let out = '';
    fills.forEach((fill, i) => out += rect(x1, levels[i][0], x2, levels[i + 1][0], fill));
    levels.forEach(([y, label, color, dash]) => {
        out += line(x1, y + .5, x2, y + .5, color, 1, `stroke-dasharray="${dash}"`);
        out += text(tx, y - 3, label, color);
    });
    return out;
}

const orange = '#ff8040', blue = '#3030dc', lime = '#68ee68', brown = '#804000', lilac = 'rgba(120,120,225,.25)';
add('price',
    fibBox(374, 896, [[527, '76,40 %', lime, '20 8'], [588, '88,20 %', brown, '5 3']], ['rgba(165,120,80,.23)'], 618) +
    fibBox(1207, 1456, [[428, '50,00 %', orange, '1 3'], [453, '61,80 %', blue, '20 8'], [485, '76,40 %', lime, '20 8'], [510, '88,20 %', brown, '5 3']],
        [lilac, 'rgba(120,255,120,.18)', 'rgba(165,120,80,.23)'], 1314) +
    fibBox(1481, 1573, [[382, '50,00 %', orange, '1 3'], [410, '61,80 %', blue, '20 8']], [lilac], 1510) +
    fibBox(1741, AXIS, [[233, '50,00 %', orange, '1 3'], [270, '61,80 %', blue, '20 8']], [lilac], 1793));

// faint projection lines
[[374, 648, 850, 178], [986, 536, 1286, 321], [1286, 321, 1676, 503], [1207, 535, 1455, 323], [1430, 503, 1481, 262],
 [1481, 262, 1792, 390], [1502, 448, 1572, 263], [1743, 388, 1879, 157]
].forEach(l => add('price', line(...l, '#c4c4c4', 1, 'stroke-dasharray="1 3"')));

// tunnel
add('price', area(fast, slow, -2, '#d8efd8', '#ffd6d6'));
add('price', poly(series(-2, slow), '#a00000', 1.7, 'stroke-dasharray="5 4"'));
add('price', colored(series(-2, fast), 4, i => fastColors.find(c => i - 2 <= c[0])[1]));

// long average
const dash = 'stroke-dasharray="7 7"';
const long = (list, color) => add('price', poly(series(list[0][0], spread(list)), color, 4, dash));
long([[32, 433], [33, 426], [35, 417], [37, 411], [40, 405], [42, 401], [44, 398], [46, 395], [48, 390], [50, 386], [52, 381], [54, 374], [56, 367]], '#000094');
long([[56, 367], [58, 371], [60, 377], [62, 384], [64, 388], [67, 395], [69, 395], [72, 400], [75, 406], [77, 411], [80, 415], [83, 419], [85, 420], [87, 423], [89, 426]], '#946400');
long([[90, 428], [92, 426]], '#ff0000');
long([[92, 426], [94, 421], [96, 417], [98, 413], [100, 411], [102, 407], [104, 402], [106, 398], [108, 393], [110, 386], [112, 380], [114, 376], [115, 373], [117, 368], [119, 362], [122, 347], [124, 333], [126, 321], [128, 306]], '#000094');

// candles
add('price', `<defs><linearGradient id="shade">
    <stop offset="0" stop-color="#fff" stop-opacity=".2"/><stop offset=".5" stop-color="#fff" stop-opacity="0"/>
    <stop offset="1" stop-color="#000" stop-opacity=".14"/></linearGradient></defs>`);
add('price', candles.map(([high, top, bottom, low, c], i) => {
    const cx = Math.round(x(i - 3));
    const body = `x="${cx - 4.5}" y="${top + .5}" width="10" height="${Math.max(bottom - top - 1, 1)}"`;
    return line(cx + .5, high, cx + .5, low + 1, '#000') +
        `<rect ${body} fill="${colors[c]}" stroke="#000"/><rect ${body} fill="url(#shade)"/>`;
}).join(''));

// Elliott zigzag and trend lines
add('price',
    poly([[28, 631], [75.5, 588], [127.5, 609], [310, 344], [322.7, 482], [387.5, 138], [543.5, 545], [765, 243], [856, 556]], '#6a9cf8', 1) +
    line(1168, 341, 1416, 336, '#b01010') + poly([[1494, 298], [1520, 275], [1598, 261]], '#b01010', 1));

// levels
[[1459, 57, '200,00 %', '#a9c0f4'], [1459, 139, '161,80 %', orange], [1459, 272, '100,00 %', '#0000d0'], [1615, 134, '100,00 %', '#0000d0']
].forEach(([bx, by, label, color]) => add('price',
    rect(bx + .5, by + .5, bx + 45.5, by + 15.5, '#fff', `stroke="${color}"`) + text(bx + 3, by + 11, label, color)));
add('price',
    line(1285, 72.5, 1675, 72.5, '#b0c4f8', 1, 'stroke-dasharray="5 3"') +
    line(1285, 154.5, 1675, 154.5, orange, 1, 'stroke-dasharray="5 3"') +
    line(1285, 287.5, 1675, 287.5, '#0000c0', 1, 'stroke-dasharray="1 3"') +
    line(1486, 149.5, 1792, 149.5, '#0000c0', 1, 'stroke-dasharray="1 3"') +
    line(387, 137, AXIS, 137, '#34b234', 4));

// dotted forecast
add('price',
    line(1754, 139, 1790, 237, '#000', 2.5, 'stroke-dasharray="2.5 5"') +
    '<polygon points="1783,237 1794,232 1792,245" fill="#000"/>' +
    line(1832, 232, AXIS, 167, '#000', 2.5, 'stroke-dasharray="2.5 5"'));

// wave labels
[[68, 568, '1'], [120, 613, '2'], [303, 322, '3'], [315, 488, '4'], [381, 117, '5'], [536, 549, 'A'], [758, 222, 'B'], [848, 558, 'C']
].forEach(([bx, by, label]) => add('price',
    rect(bx + .5, by + .5, bx + 12.5, by + 16.5, '#fff', 'stroke="#6a9cf8"') +
    text(bx + 6.5, by + 13, label, '#6a9cf8', 'class="wave-small" text-anchor="middle"')));
add('price', text(389, 134, '5.522,4', '#34b234'));
[[1722, 45, 38, '(iii) ?'], [400, 107, 26, '[1]'], [869, 530, 26, '[2]'], [947, 374, 26, '(1)'], [960, 505, 26, '(2)'],
 [1420, 295, 18, '1'], [1433, 493, 18, '2'], [1509, 237, 22, '(i)'], [1573, 372, 25, '(ii)'], [1806, 238, 27, '(iv)']
].forEach(([bx, by, w, label]) => add('price',
    `<rect x="${bx + .5}" y="${by + .5}" width="${w}" height="23" rx="3" fill="none" stroke="#6a9cf8"/>` +
    text(bx + w / 2, by + 17, label, '#000', 'class="wave" text-anchor="middle"')));

add('price', text(30, 655, 'IT-Finance.com - Tiempo Real', '#000', 'class="credit"'));
axis('price', 22, 657,
    [['6.500', 29], ['6.000', 84], ['5.500', 140], ['4.500', 251], ['3.500', 362], ['3.000', 417], ['2.500', 473], ['2.000', 528], ['1.500', 584], ['1.000', 639]],
    [['5.380,6', 153, '#00cc00'], ['4.975,7', 198, '#a00000'], ['4.023,5', 305, '#000094']]);

/* ---------- Sistema de trenes ---------- */

const train = [
    673, 681, 689, 695, 700, 701, 701, 688, 676, 670, 670, 670, 670, 671, 670, 672, 675, 673, 679, 689, 690, 685,
    678, 676, 675, 677, 683, 697, 707, 721, 735, 734, 733, 734, 746, 756, 758, 752, 746, 733, 726, 711, 700, 683,
    677, 670, 670, 669, 669, 675, 674, 674, 670, 672, 677, 679, 702, 727, 751, 755, 753, 749, 740, 729, 718, 717,
    708, 700, 692, 686, 698, 712, 728, 733, 728, 722, 708, 690, 678, 670, 669, 671, 671, 672, 677, 684, 695, 710,
    722, 730, 737, 722, 706, 690, 681, 681, 686, 690, 700, 708, 716, 718, 704, 688, 692, 703, 716, 705, 690, 678,
    672, 671, 680, 700, 722, 728, 715, 695, 682, 675, 671, 670, 672, 675, 681, 684, 680, 674, 669
];
const trainSignal = train.map((y, i) => i ? (y + train[i - 1]) / 2 : y - 2);
const slowTrain = [
    725, 725, 728, 732, 735, 736, 737, 737, 736, 733, 730, 727, 722, 721, 722, 719, 716, 719, 720, 722, 727, 731,
    734, 732, 730, 725, 722, 720, 721, 723, 722, 723, 723, 719, 715, 715, 715, 721, 720, 711, 700, 693, 687, 684,
    686, 693, 701, 705, 700, 692, 687, 683, 678, 676, 675, 673, 672, 671, 671, 670, 668
];
const slowSignal = slowTrain.map((y, i) => {
    const part = slowTrain.slice(Math.max(0, i - 4), i + 1);
    return part.reduce((a, b) => a + b) / part.length;
});

grid('trenes', 657, 769, [706, 725]);
add('trenes',
    rect(28, 667, END, 686, '#daf5d6') + rect(28, 745, END, 764, '#ffdada') +
    area(train, trainSignal, 0, 'rgba(120,230,120,.5)', 'rgba(240,130,130,.55)') +
    `<polygon points="${series(116, train).slice(0, 0).concat(series(118, train.slice(118))).join(' ')} ${END},686 ${x(117)},686" fill="rgba(0,110,0,.4)"/>` +
    area(slowTrain, slowSignal, 68, 'rgba(90,90,220,.35)', 'rgba(255,150,150,.4)') +
    [667.5, 686.5, 745.5, 764.5].map(y => line(28, y, END, y, '#000')).join('') +
    line(32, 715.5, END, 715.5, '#0000a0', 1.5, 'stroke-dasharray="6 5"') +
    poly(series(0, trainSignal), '#222', 1, 'stroke-dasharray="4 3"') +
    colored(series(0, train), 1.7, (i, a, b) => b > a ? '#e81010' : '#000') +
    poly(series(71, slowSignal.slice(3)), '#222', 2.5, 'stroke-dasharray="6 6"') +
    colored(series(68, slowTrain), 3, (i, a, b) => b > a ? '#ff0000' : '#0000a4'));
[[6, 701], [12, 671], [16, 677], [21, 685], [24, 676], [31, 735], [37, 755], [50, 675], [60, 754], [73, 732], [91, 736], [101, 719], [116, 721], [126, 683]
].forEach(([k, y]) => add('trenes', up(k, y, '#0000b4', 5)));
[[11, 669], [13, 670], [18, 679], [23, 676], [25, 676], [33, 735], [48, 670], [53, 672], [70, 698], [81, 671], [85, 685], [96, 687], [104, 692], [111, 674], [122, 672]
].forEach(([k, y]) => add('trenes', down(k, y, '#b40000', 5)));
axis('trenes', 657, 769, [['60', 705], ['40', 725]],
    [['', 666], ['', 669, '#0000a0'], ['94,556', 672, '#333', 671], ['80', 686], ['50', 715, '#0000a0'], ['20', 745], ['0', 763]]);

/* ---------- Willy ---------- */

const willy = [
    815, 806, 806, 815, 833, 832, 839, 833, 834, 829, 828, 827, 828, 824, 823, 821, 817, 816, 810, 814, 811, 807,
    805, 801, 802, 801, 817, 823, 829, 843, 849, 843, 832, 830, 831, 838, 832, 836, 835, 831, 845, 838, 836, 842,
    841, 838, 831, 833, 822, 819, 817, 807, 804, 817, 801, 807, 816, 810, 817, 822, 826, 819, 810, 806, 805, 803,
    800, 798, 795, 794, 807, 798, 793, 785, 818, 807, 800, 784, 778, 781, 780, 782, 780, 799, 818, 800, 783, 780,
    780, 780, 782, 781, 780, 782, 783, 783, 779, 778, 778
];
const tints = { b: 'rgba(130,130,250,.5)', r: 'rgba(250,70,70,.5)', d: 'rgba(150,20,20,.65)', g: 'rgba(30,150,30,.65)' };

grid('willy', 769, 859, [807, 825]);
[[31, 31, 'b'], [33, 33, 'd'], [34, 34, 'r'], [36, 36, 'r'], [38, 38, 'r'], [42, 42, 'r'], [47, 47, 'g'], [48, 48, 'b'],
 [50, 53, 'b'], [55, 55, 'b'], [56, 56, 'd'], [57, 60, 'r'], [64, 65, 'r'], [69, 70, 'r'], [73, 73, 'r'], [76, 77, 'r'],
 [81, 81, 'g'], [82, 82, 'b'], [83, 83, 'd'], [84, 84, 'b'], [85, 85, 'd'], [86, 86, 'g'], [87, 87, 'd'], [88, 89, 'r'],
 [91, 91, 'g'], [92, 92, 'b'], [94, 94, 'b'], [96, 98, 'b'], [100, 103, 'b'], [104, 104, 'd'], [105, 105, 'g'],
 [107, 108, 'b'], [111, 111, 'b'], [114, 114, 'd'], [115, 115, 'g'], [117, 117, 'b'], [119, 120, 'b'], [122, 122, 'b'], [125, 126, 'b']
].forEach(([a, b, t]) => add('willy', rect(x(a) - 6.5, 769, x(b) + 6.5, 859, tints[t])));

// green fill while the line is above -25, red while it is below -75
const willyPoints = series(30, willy);
add('willy', `<clipPath id="above"><rect x="28" y="769" width="1713" height="27"/></clipPath>
    <clipPath id="below"><rect x="28" y="837" width="1713" height="22"/></clipPath>
    <polygon clip-path="url(#above)" points="${x(30)},816 ${willyPoints.join(' ')} ${END},816" fill="rgba(60,170,60,.5)"/>
    <polygon clip-path="url(#below)" points="${x(30)},816 ${willyPoints.join(' ')} ${END},816" fill="rgba(120,0,0,.45)"/>`);
add('willy',
    line(32, 777.5, END, 777.5, '#000', 1, 'stroke-dasharray="5 4"') +
    line(32, 855.5, END, 855.5, '#000', 1, 'stroke-dasharray="5 4"') +
    line(28, 796.5, END, 796.5, '#0000a0', 2) + line(28, 836.5, END, 836.5, '#d00000', 2) +
    line(32, 816.5, END, 816.5, '#0000a0', 1.5, 'stroke-dasharray="6 5"') +
    colored(willyPoints, 3.5, (i, a, b) => {
        if (b < 797 && a < 812) return '#00c400';
        if (b > 835 || a > 842) return '#900000';
        return b > a ? '#ff9800' : '#0000d8';
    }));
[[46, 817], [80, 817], [83, 817], [86, 817], [90, 817], [104, 817], [114, 817]].forEach(([k, y]) => add('willy', up(k, y, '#0000a8')));
[[32, 816], [55, 816], [82, 816], [85, 816], [87, 816], [103, 816], [113, 816]].forEach(([k, y]) => add('willy', down(k, y, '#b40000')));
axis('willy', 769, 859, [['-40', 807], ['-60', 825]],
    [['', 776, '#333', 777], ['-1,7039', 782, '#00c400', 777], ['-25', 796, '#0000a0'], ['-50', 816, '#0000a0'], ['-75', 836, '#c00000'], ['-100', 852, '#333', 855]]);

/* ---------- Awesome ---------- */

const ZERO = 908;
const ao = [
    902, 909, 910, 914, 923, 934, 936, 936, 933, 929, 925, 922, 920, 917, 913, 910, 905, 901, 897, 895, 895, 893,
    890, 889, 889, 889, 895, 903, 910, 918, 928, 932, 928, 923, 921, 920, 921, 921, 918, 914, 915, 922, 924, 921,
    920, 918, 914, 911, 909, 907, 904, 902, 900, 898, 896, 895, 898, 901, 905, 908, 911, 910, 906, 903, 901, 899,
    899, 901, 903, 905, 906, 905, 903, 901, 905, 909, 908, 905, 901, 897, 894, 894, 896, 900, 907, 910, 907, 902,
    898, 895, 892, 891, 891, 892, 892, 892, 892, 889, 885
];
const aoSignal = spread([
    [24, 874], [25, 870], [26, 868], [27, 867], [28, 868], [29, 873], [30, 878], [31, 885], [32, 890], [33, 894],
    [34, 901], [35, 906], [36, 911], [37, 916], [38, 919], [39, 919], [40, 918], [42, 917], [44, 916], [47, 912],
    [48, 909], [50, 907], [52, 903], [54, 899], [55, 898], [56, 897], [57, 899], [58, 903], [59, 908], [60, 913],
    [61, 917], [62, 920], [63, 920], [64, 919], [66, 915], [68, 912], [70, 912], [73, 918], [76, 917], [80, 911],
    [84, 903], [86, 900], [88, 902], [92, 905], [95, 904], [98, 903], [101, 905], [105, 904], [107, 907],
    [110, 902], [113, 900], [115, 902], [118, 900], [121, 893], [124, 891], [126, 889], [128, 885]
]);

grid('awesome', 859, 940, [874, 891, 925]);
for (let k = 24; k < 34; k++) {
    const tint = k < 28 ? ['#d4fad4', '#a8e8a8'] : ['#fbd2d2', '#f0b0b0'];
    add('awesome', rect(x(k) - 5, aoSignal[k - 24], x(k) + 5, ZERO, tint[0], `stroke="${tint[1]}"`));
}
ao.forEach((y, i) => {
    const k = 30 + i;
    const rising = i && y <= ao[i - 1];
    if (k < 31) return;
    const color = y > ZERO ? (rising ? '#008c8c' : '#f01010') : (rising ? '#0808f0' : '#f010e8');
    const bar = fill => rect(x(k) - 5.5, Math.min(y, ZERO), x(k) + 5.5, Math.max(y, ZERO), fill);
    add('awesome', bar(color) + bar('url(#shade)'));
});
add('awesome',
    line(28, 908.5, END, 908.5, '#0000f0', 2) +
    colored(series(30, ao), 3.5, (i, a, b) => b <= a ? '#000038' : '#b000b0') +
    colored(series(24, aoSignal), 3.5, (i, a, b) => b <= a ? '#64f864' : '#ff9800'));
[[44, 912], [64, 918], [69, 912], [78, 912], [93, 905], [108, 905], [126, 889]].forEach(([k, y]) => add('awesome', up(k, y, '#00f0f0', 5)));
[[57, 904], [65, 919], [70, 913], [73, 919], [87, 902], [95, 902], [105, 906], [113, 902], [123, 891], [127, 887]].forEach(([k, y]) => add('awesome', down(k, y, '#f8f000', 5)));
axis('awesome', 859, 940, [['-1.000', 925]],
    [['', 880, '#00c400', 885], ['', 886, '#333', 885], ['1.362,4', 891, '#0000e0', 885], ['0', 914, '#0000e0', 908]]);

/* ---------- Fuerza ---------- */

add('fuerza', rect(29, 940, 1748, 995, '#ffff84'));
[[56, 108], [160, 186], [199, 485], [498, 524], [707, 733], [772, 889], [980, 1006], [1149, 1240], [1358, 1384],
 [1410, 1488], [1501, 1592], [1632, 1645], [1683, 1722]
].forEach(([a, b]) => add('fuerza', rect(a, 940, b, 995, '#40ff40')));
grid('fuerza', 940, 995, []);
add('fuerza', line(28, 969.5, END, 969.5, '#000'));
axis('fuerza', 940, 995, [['0,505', 945], ['0,495', 991]], [['0,5000', 969]]);
add('fuerza', line(28, 995.5, AXIS, 995.5, '#708c99'));
for (let k = 0; k <= 136; k += 4) {
    add('fuerza', line(x(k), 995, x(k), 999, '#708c99') +
        text(x(k), 1008, 1994 + k / 4, '#000', 'text-anchor="middle"'));
}
```
